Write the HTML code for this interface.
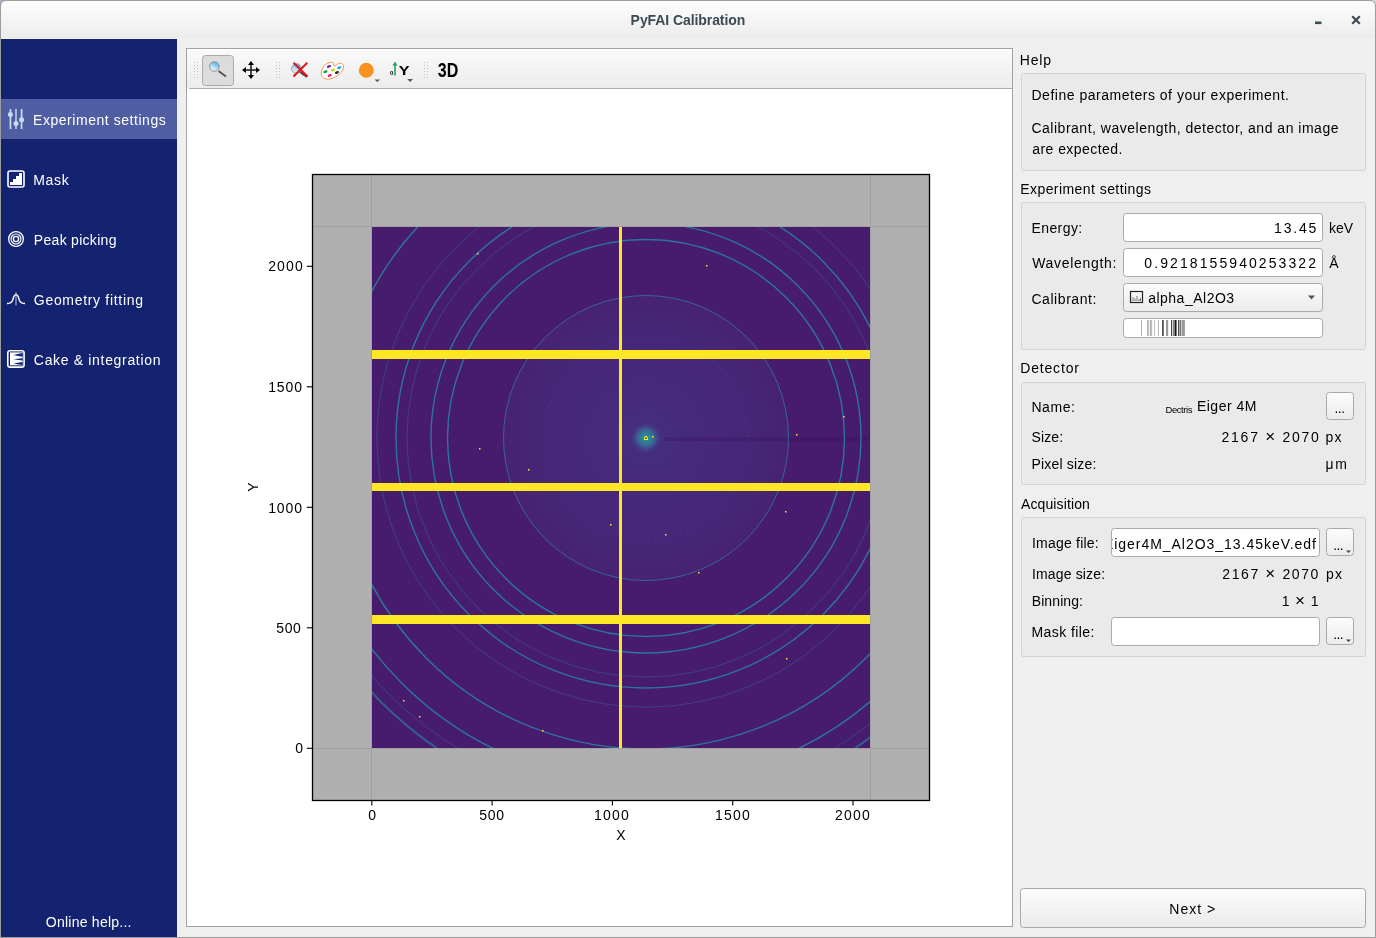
<!DOCTYPE html><html><head><meta charset="utf-8"><title>PyFAI Calibration</title><style>html,body{margin:0;padding:0;background:#efefef;overflow:hidden}svg{display:block;font-family:"Liberation Sans",sans-serif;will-change:transform}</style></head><body>
<svg width="1376" height="938" viewBox="0 0 1376 938">
<defs>
<linearGradient id="gTitle" x1="0" y1="0" x2="0" y2="1"><stop offset="0" stop-color="#fdfdfd"/><stop offset="1" stop-color="#ececec"/></linearGradient>
<linearGradient id="gTool" x1="0" y1="0" x2="0" y2="1"><stop offset="0" stop-color="#fafafa"/><stop offset="1" stop-color="#ececec"/></linearGradient>
<linearGradient id="gBtn" x1="0" y1="0" x2="0" y2="1"><stop offset="0" stop-color="#fcfcfc"/><stop offset="1" stop-color="#ebebeb"/></linearGradient>
<radialGradient id="gGlow" cx="646" cy="438" r="143" gradientUnits="userSpaceOnUse"><stop offset="0" stop-color="#452e7e"/><stop offset="0.5" stop-color="#46287a"/><stop offset="0.85" stop-color="#472575"/><stop offset="1" stop-color="#472371"/></radialGradient>
<radialGradient id="gSpot" cx="646" cy="438" r="17" gradientUnits="userSpaceOnUse"><stop offset="0" stop-color="#22a884"/><stop offset="0.2" stop-color="#2a8a90"/><stop offset="0.5" stop-color="#3a6196"/><stop offset="1" stop-color="#472b7b" stop-opacity="0"/></radialGradient>
<clipPath id="cImg"><rect x="372" y="227" width="498" height="521"/></clipPath>
<clipPath id="cFile"><rect x="1112" y="529" width="206" height="27"/></clipPath>
</defs>
<rect x="0" y="0" width="1376" height="938" fill="#efefef"/><rect x="0" y="0" width="8" height="8" fill="#a3b3c3"/><rect x="1368" y="0" width="8" height="8" fill="#d8d8d8"/>
<path d="M1 38 V6 Q1 1 6 1 H1370 Q1375 1 1375 6 V38 Z" fill="url(#gTitle)"/>
<text x="630.62" y="25" font-size="14" fill="#3c4b53" text-anchor="start" font-weight="bold" textLength="114.68" lengthAdjust="spacing" >PyFAI Calibration</text>
<rect x="1315" y="21.5" width="6.5" height="2.6" fill="#3c4b53"/>
<path d="M1353 17 L1359 23 M1359 17 L1353 23" stroke="#3c4b53" stroke-width="2.2" stroke-linecap="square"/>
<path d="M0.5 938 V6 Q0.5 0.5 6 0.5 H1370 Q1375.5 0.5 1375.5 6 V937.5 H0.5" fill="none" stroke="#9c9c9c" stroke-width="1"/>
<rect x="1" y="39" width="176" height="898" fill="#13236f"/>
<rect x="1" y="99" width="176" height="40" fill="#4f5ea3"/>
<g fill="#c4def0" stroke="none"><rect x="9.6" y="109" width="1.7" height="20"/><rect x="15.15" y="109" width="1.7" height="20" fill="#b2cde4"/><rect x="20.75" y="109" width="1.7" height="20"/><circle cx="10.4" cy="114.5" r="2.5"/><circle cx="16" cy="123.5" r="2.5"/><circle cx="21.6" cy="119.75" r="2.5"/></g>
<text x="33.00" y="125" font-size="14" fill="#fff" text-anchor="start" textLength="132.76" lengthAdjust="spacing" >Experiment settings</text>
<rect x="8" y="171" width="16" height="16" rx="2" fill="none" stroke="#fff" stroke-width="1.6"/>
<path d="M10 185 V182 H13 V179 H16 V176 H19 V173 H22 V185 Z" fill="#fff"/>
<text x="33.28" y="185" font-size="14" fill="#fff" text-anchor="start" textLength="35.40" lengthAdjust="spacing" >Mask</text>
<g fill="none" stroke="#fff"><circle cx="16" cy="239" r="7.4" stroke-width="1.3"/><circle cx="16" cy="239" r="5" stroke-width="1.2"/><circle cx="16" cy="239" r="2.6" stroke-width="1.4"/></g>
<text x="33.84" y="245" font-size="14" fill="#fff" text-anchor="start" textLength="82.60" lengthAdjust="spacing" >Peak picking</text>
<rect x="15.3" y="292.2" width="1.4" height="13.2" fill="#8a96cc"/>
<path d="M7 303.5 C10 303.5 11.6 302.8 12.6 300.2 L13.7 296.8 C14.4 295 15.1 294.6 16 294.6 C16.9 294.6 17.6 295 18.3 296.8 L19.4 300.2 C20.4 302.8 22 303.5 25 303.5" fill="none" stroke="#fff" stroke-width="1.4"/>
<text x="33.84" y="305" font-size="14" fill="#fff" text-anchor="start" textLength="109.12" lengthAdjust="spacing" >Geometry fitting</text>
<rect x="7.8" y="350.7" width="16.3" height="16.4" rx="2.2" fill="none" stroke="#fff" stroke-width="1.6"/>
<defs><linearGradient id="gWedge" x1="0" y1="0" x2="1" y2="0"><stop offset="0" stop-color="#13236f" stop-opacity="0.3"/><stop offset="0.35" stop-color="#13236f"/><stop offset="1" stop-color="#13236f"/></linearGradient></defs>
<rect x="10" y="352" width="12.6" height="13.6" fill="#fff"/>
<path d="M12.8 354.9 L22.6 352.9 V356.8 Z M12.8 359.3 L22.6 358.2 V360.6 Z M12.8 363.6 L22.6 362.0 V365.0 Z" fill="url(#gWedge)"/>
<rect x="10" y="351.8" width="12.6" height="1.1" fill="#13236f" opacity="0.45"/><rect x="10" y="364.9" width="12.6" height="1.1" fill="#13236f" opacity="0.45"/>
<text x="33.84" y="365" font-size="14" fill="#fff" text-anchor="start" textLength="126.60" lengthAdjust="spacing" >Cake &amp; integration</text>
<text x="45.84" y="927" font-size="14" fill="#fff" text-anchor="start" textLength="85.60" lengthAdjust="spacing" >Online help...</text>
<rect x="186.5" y="48.5" width="826" height="878" fill="#fff" stroke="#a2a2a2"/>
<rect x="187" y="49" width="825" height="39" fill="url(#gTool)"/>
<rect x="187" y="49" width="825" height="1" fill="#fff"/>
<rect x="189" y="88" width="823" height="1" fill="#acacac"/>
<rect x="194" y="62" width="1" height="1" fill="#c2c2c2"/>
<rect x="197" y="62" width="1" height="1" fill="#c2c2c2"/>
<rect x="194" y="65" width="1" height="1" fill="#c2c2c2"/>
<rect x="197" y="65" width="1" height="1" fill="#c2c2c2"/>
<rect x="194" y="68" width="1" height="1" fill="#c2c2c2"/>
<rect x="197" y="68" width="1" height="1" fill="#c2c2c2"/>
<rect x="194" y="71" width="1" height="1" fill="#c2c2c2"/>
<rect x="197" y="71" width="1" height="1" fill="#c2c2c2"/>
<rect x="194" y="74" width="1" height="1" fill="#c2c2c2"/>
<rect x="197" y="74" width="1" height="1" fill="#c2c2c2"/>
<rect x="194" y="77" width="1" height="1" fill="#c2c2c2"/>
<rect x="197" y="77" width="1" height="1" fill="#c2c2c2"/>
<rect x="276" y="62" width="1" height="1" fill="#c2c2c2"/>
<rect x="279" y="62" width="1" height="1" fill="#c2c2c2"/>
<rect x="276" y="65" width="1" height="1" fill="#c2c2c2"/>
<rect x="279" y="65" width="1" height="1" fill="#c2c2c2"/>
<rect x="276" y="68" width="1" height="1" fill="#c2c2c2"/>
<rect x="279" y="68" width="1" height="1" fill="#c2c2c2"/>
<rect x="276" y="71" width="1" height="1" fill="#c2c2c2"/>
<rect x="279" y="71" width="1" height="1" fill="#c2c2c2"/>
<rect x="276" y="74" width="1" height="1" fill="#c2c2c2"/>
<rect x="279" y="74" width="1" height="1" fill="#c2c2c2"/>
<rect x="276" y="77" width="1" height="1" fill="#c2c2c2"/>
<rect x="279" y="77" width="1" height="1" fill="#c2c2c2"/>
<rect x="424" y="62" width="1" height="1" fill="#c2c2c2"/>
<rect x="427" y="62" width="1" height="1" fill="#c2c2c2"/>
<rect x="424" y="65" width="1" height="1" fill="#c2c2c2"/>
<rect x="427" y="65" width="1" height="1" fill="#c2c2c2"/>
<rect x="424" y="68" width="1" height="1" fill="#c2c2c2"/>
<rect x="427" y="68" width="1" height="1" fill="#c2c2c2"/>
<rect x="424" y="71" width="1" height="1" fill="#c2c2c2"/>
<rect x="427" y="71" width="1" height="1" fill="#c2c2c2"/>
<rect x="424" y="74" width="1" height="1" fill="#c2c2c2"/>
<rect x="427" y="74" width="1" height="1" fill="#c2c2c2"/>
<rect x="424" y="77" width="1" height="1" fill="#c2c2c2"/>
<rect x="427" y="77" width="1" height="1" fill="#c2c2c2"/>
<rect x="202.5" y="55.5" width="31" height="30" rx="3" fill="#dcdcdc" stroke="#ababab"/>
<defs><linearGradient id="gLens" x1="0.7" y1="0" x2="0.2" y2="1"><stop offset="0" stop-color="#3ab0ea"/><stop offset="0.6" stop-color="#bfe2f5"/><stop offset="1" stop-color="#f0f8fc"/></linearGradient></defs>
<line x1="218.5" y1="71" x2="226" y2="76.5" stroke="#5b4a50" stroke-width="1.8"/>
<circle cx="214.3" cy="66.5" r="4.8" fill="url(#gLens)" stroke="#9a8e90" stroke-width="1"/>
<g fill="#000"><rect x="250.2" y="63" width="1.6" height="14" fill="#222"/><rect x="244" y="69.2" width="14" height="1.6" fill="#222"/><path d="M251 61 L254 65 H248 Z M251 79 L254 75 H248 Z M242 70 L246 67 V73 Z M260 70 L256 67 V73 Z"/></g>
<circle cx="296.4" cy="68.5" r="4.8" fill="url(#gLens)" stroke="#9a9a9a" stroke-width="1"/>
<line x1="300" y1="72" x2="307" y2="77" stroke="#444" stroke-width="2"/>
<path d="M293.5 62.7 L307.5 76.5 M307.3 62.7 L293.5 76.5" stroke="#e3141c" stroke-width="2"/>
<path d="M330 62.5 C324 63.5 320.5 70 321.5 75 C322.5 79.5 328 80 333 78 C339 75.5 344.5 70 343.5 65.5 C342.5 62.5 338.5 63 336.5 65 C334.5 66.5 333 66 333.5 64 C334 62.5 332 62 330 62.5 Z" fill="#fff" stroke="#f29a4a" stroke-width="1"/>
<ellipse cx="329" cy="66.4" rx="2.2" ry="1.3" transform="rotate(-20 329 66.4)" fill="#6a22b0"/>
<ellipse cx="339.2" cy="67.8" rx="2.2" ry="1.3" transform="rotate(-20 339.2 67.8)" fill="#1ea8e8"/>
<ellipse cx="333" cy="70" rx="2.2" ry="1.3" transform="rotate(-20 333 70)" fill="#c8dc10"/>
<ellipse cx="325.4" cy="71.8" rx="2.2" ry="1.3" transform="rotate(-20 325.4 71.8)" fill="#10a040"/>
<ellipse cx="337" cy="72.5" rx="2.2" ry="1.3" transform="rotate(-20 337 72.5)" fill="#303030"/>
<ellipse cx="329.8" cy="75.4" rx="2.2" ry="1.3" transform="rotate(-20 329.8 75.4)" fill="#e81c78"/>
<circle cx="366.3" cy="70.2" r="7.5" fill="#f7931e"/>
<path d="M374.5 79.5 H380 L377.25 82 Z" fill="#555"/>
<rect x="394.2" y="64.5" width="1.6" height="11" fill="#1fa35a"/><path d="M392.4 65.6 L395 61.6 L397.6 65.6 Z" fill="#1fa35a"/>
<text x="390.00" y="75" font-size="6" fill="#000" text-anchor="start" font-weight="bold" >0</text>
<text x="398.70" y="75.1" font-size="13.2" fill="#000" text-anchor="start" font-weight="bold" textLength="10.80" lengthAdjust="spacingAndGlyphs" >Y</text>
<path d="M407.3 79 H413 L410.15 82 Z" fill="#555"/>
<text x="437.80" y="77" font-size="19.5" fill="#000" text-anchor="start" font-weight="bold" textLength="20.50" lengthAdjust="spacingAndGlyphs" >3D</text>
<rect x="312" y="174" width="617" height="626" fill="#b0b0b0"/>
<g clip-path="url(#cImg)">
<rect x="372" y="227" width="498" height="521" fill="#471b6e"/>
<circle cx="646" cy="438" r="143" fill="url(#gGlow)"/>
<rect x="664" y="437" width="206" height="4" fill="#3a0c5e" opacity="0.3"/>
<circle cx="646" cy="438" r="102" fill="none" stroke="#3f5e98" stroke-width="1.2" stroke-dasharray="1.5 5" opacity="0.4"/>
<circle cx="646" cy="438" r="142.5" fill="none" stroke="#3274a0" stroke-width="1.0" opacity="0.8"/>
<circle cx="646" cy="438" r="198.5" fill="none" stroke="#2c7699" stroke-width="1.4" opacity="1"/>
<circle cx="646" cy="438" r="215" fill="none" stroke="#2c7699" stroke-width="1.4" opacity="1"/>
<circle cx="646" cy="438" r="239" fill="none" stroke="#3a5e98" stroke-width="0.9" opacity="0.6"/>
<circle cx="646" cy="438" r="250" fill="none" stroke="#2c7699" stroke-width="1.4" opacity="1"/>
<circle cx="646" cy="438" r="269" fill="none" stroke="#3a5e98" stroke-width="0.9" opacity="0.6"/>
<circle cx="646" cy="438" r="311" fill="none" stroke="#2c7699" stroke-width="1.5" opacity="1"/>
<circle cx="646" cy="438" r="346" fill="none" stroke="#2c7699" stroke-width="1.5" opacity="1"/>
<circle cx="646" cy="438" r="363" fill="none" stroke="#3a5e98" stroke-width="0.9" opacity="0.6"/>
<circle cx="646" cy="438" r="374" fill="none" stroke="#2c7699" stroke-width="2.0" opacity="0.75"/>
<circle cx="646" cy="438" r="17" fill="url(#gSpot)"/>
<path d="M644 437 H645 V436 H647 V437 H648 V440 H644 Z" fill="#fde725"/><rect x="645.2" y="437.4" width="1.6" height="1.6" fill="#1c3a8a"/>
<rect x="652" y="436" width="1.5" height="1.5" fill="#fde725"/>
<rect x="477" y="253" width="1.5" height="1.5" fill="#fde725"/>
<rect x="706" y="265" width="1.5" height="1.5" fill="#fde725"/>
<rect x="479" y="448" width="1.5" height="1.5" fill="#fde725"/>
<rect x="528" y="469" width="1.5" height="1.5" fill="#fde725"/>
<rect x="610" y="524" width="1.5" height="1.5" fill="#fde725"/>
<rect x="665" y="534" width="1.5" height="1.5" fill="#fde725"/>
<rect x="698" y="572" width="1.5" height="1.5" fill="#fde725"/>
<rect x="785" y="511" width="1.5" height="1.5" fill="#fde725"/>
<rect x="796" y="434" width="1.5" height="1.5" fill="#fde725"/>
<rect x="843" y="416" width="1.5" height="1.5" fill="#fde725"/>
<rect x="786" y="658" width="1.5" height="1.5" fill="#fde725"/>
<rect x="403" y="700" width="1.5" height="1.5" fill="#fde725"/>
<rect x="419" y="716" width="1.5" height="1.5" fill="#fde725"/>
<rect x="542" y="730" width="1.5" height="1.5" fill="#fde725"/>
<rect x="372" y="350" width="498" height="9" fill="#fde725"/>
<rect x="372" y="483" width="498" height="8" fill="#fde725"/>
<rect x="372" y="615" width="498" height="9" fill="#fde725"/>
<rect x="619" y="227" width="3" height="521" fill="#fde725"/>
</g>
<g stroke="#a0a0a0" stroke-width="1"><line x1="371.5" y1="174" x2="371.5" y2="800"/><line x1="870.5" y1="174" x2="870.5" y2="800"/><line x1="312" y1="226.5" x2="929" y2="226.5"/><line x1="312" y1="748.5" x2="929" y2="748.5"/></g>
<rect x="312.5" y="174.5" width="617" height="626" fill="none" stroke="#000" stroke-width="1.3"/>
<line x1="371.8" y1="800" x2="371.8" y2="805.5" stroke="#000" stroke-width="1.1"/>
<text x="368.36" y="820" font-size="14" fill="#000" text-anchor="start" textLength="10.82" lengthAdjust="spacing" >0</text>
<line x1="306.8" y1="748.3" x2="312" y2="748.3" stroke="#000" stroke-width="1.1"/>
<text x="295.14" y="752.9" font-size="14" fill="#000" text-anchor="start" textLength="10.24" lengthAdjust="spacing" >0</text>
<line x1="492.1" y1="800" x2="492.1" y2="805.5" stroke="#000" stroke-width="1.1"/>
<text x="479.14" y="820" font-size="14" fill="#000" text-anchor="start" textLength="24.92" lengthAdjust="spacing" >500</text>
<line x1="306.8" y1="627.8" x2="312" y2="627.8" stroke="#000" stroke-width="1.1"/>
<text x="276.14" y="633.2" font-size="14" fill="#000" text-anchor="start" textLength="24.78" lengthAdjust="spacing" >500</text>
<line x1="612.4" y1="800" x2="612.4" y2="805.5" stroke="#000" stroke-width="1.1"/>
<text x="594.06" y="820" font-size="14" fill="#000" text-anchor="start" textLength="34.72" lengthAdjust="spacing" >1000</text>
<line x1="306.8" y1="507.3" x2="312" y2="507.3" stroke="#000" stroke-width="1.1"/>
<text x="268.14" y="512.6" font-size="14" fill="#000" text-anchor="start" textLength="34.00" lengthAdjust="spacing" >1000</text>
<line x1="732.7" y1="800" x2="732.7" y2="805.5" stroke="#000" stroke-width="1.1"/>
<text x="714.92" y="820" font-size="14" fill="#000" text-anchor="start" textLength="35.00" lengthAdjust="spacing" >1500</text>
<line x1="306.8" y1="386.8" x2="312" y2="386.8" stroke="#000" stroke-width="1.1"/>
<text x="268.14" y="392.1" font-size="14" fill="#000" text-anchor="start" textLength="34.00" lengthAdjust="spacing" >1500</text>
<line x1="853.0" y1="800" x2="853.0" y2="805.5" stroke="#000" stroke-width="1.1"/>
<text x="835.08" y="820" font-size="14" fill="#000" text-anchor="start" textLength="34.84" lengthAdjust="spacing" >2000</text>
<line x1="306.8" y1="266.3" x2="312" y2="266.3" stroke="#000" stroke-width="1.1"/>
<text x="268.14" y="271.1" font-size="14" fill="#000" text-anchor="start" textLength="34.64" lengthAdjust="spacing" >2000</text>
<text x="616.30" y="840" font-size="14" fill="#000" text-anchor="start" textLength="6.90" lengthAdjust="spacing" >X</text>
<text x="0" y="0" font-size="14" fill="#000" text-anchor="middle" transform="translate(257.7 487) rotate(-90)">Y</text>
<text x="1019.64" y="65" font-size="14" fill="#000" text-anchor="start" textLength="31.44" lengthAdjust="spacing" >Help</text>
<rect x="1021.5" y="73.5" width="344" height="97" rx="2" fill="#eaeaea" stroke="#d3d3d3"/>
<text x="1031.44" y="100" font-size="14" fill="#000" text-anchor="start" textLength="257.48" lengthAdjust="spacing" >Define parameters of your experiment.</text>
<text x="1031.44" y="133.3" font-size="14" fill="#000" text-anchor="start" textLength="307.04" lengthAdjust="spacing" >Calibrant, wavelength, detector, and an image</text>
<text x="1032.24" y="154.2" font-size="14" fill="#000" text-anchor="start" textLength="90.12" lengthAdjust="spacing" >are expected.</text>
<text x="1020.20" y="194" font-size="14" fill="#000" text-anchor="start" textLength="130.80" lengthAdjust="spacing" >Experiment settings</text>
<rect x="1021.5" y="202.5" width="344" height="147" rx="2" fill="#eaeaea" stroke="#d3d3d3"/>
<text x="1031.44" y="233" font-size="14" fill="#000" text-anchor="start" textLength="50.76" lengthAdjust="spacing" >Energy:</text>
<rect x="1123.5" y="213.5" width="199" height="28" rx="3" fill="#fff" stroke="#a9a9a9"/>
<text x="1274.08" y="233" font-size="14" fill="#000" text-anchor="start" textLength="42.28" lengthAdjust="spacing" >13.45</text>
<text x="1328.96" y="233" font-size="14" fill="#000" text-anchor="start" textLength="24.24" lengthAdjust="spacing" >keV</text>
<text x="1032.24" y="268.3" font-size="14" fill="#000" text-anchor="start" textLength="84.12" lengthAdjust="spacing" >Wavelength:</text>
<rect x="1123.5" y="248.5" width="199" height="28" rx="3" fill="#fff" stroke="#a9a9a9"/>
<text x="1144.36" y="268" font-size="14" fill="#000" text-anchor="start" textLength="171.64" lengthAdjust="spacing" >0.9218155940253322</text>
<text x="1329.20" y="268" font-size="14" fill="#000" text-anchor="start" textLength="8.00" lengthAdjust="spacing" >Å</text>
<text x="1031.44" y="303.5" font-size="14" fill="#000" text-anchor="start" textLength="64.92" lengthAdjust="spacing" >Calibrant:</text>
<rect x="1123.5" y="283.5" width="199" height="28" rx="3" fill="url(#gBtn)" stroke="#a9a9a9"/>
<rect x="1130.5" y="291.5" width="12" height="11" fill="none" stroke="#222" stroke-width="1.2"/>
<path d="M1133 301 V297 M1135 301 V298.5 M1137 301 V296 M1139 301 V299 M1140.5 301 V298" stroke="#555" stroke-width="0.8"/>
<text x="1148.14" y="302.6" font-size="14" fill="#000" text-anchor="start" textLength="85.96" lengthAdjust="spacing" >alpha_Al2O3</text>
<path d="M1308 295.5 H1315 L1311.5 299.5 Z" fill="#555"/>
<rect x="1123.5" y="318.5" width="199" height="19" rx="3" fill="#fff" stroke="#a9a9a9"/>
<rect x="1141" y="320" width="0.6" height="16" fill="#777"/>
<rect x="1147" y="320" width="0.6" height="16" fill="#888"/>
<rect x="1148.5" y="320" width="0.6" height="16" fill="#888"/>
<rect x="1150" y="320" width="1" height="16" fill="#aaa"/>
<rect x="1151.5" y="320" width="0.6" height="16" fill="#888"/>
<rect x="1154" y="320" width="0.6" height="16" fill="#999"/>
<rect x="1158" y="320" width="0.6" height="16" fill="#888"/>
<rect x="1162" y="320" width="1.8" height="16" fill="#555"/>
<rect x="1166" y="320" width="2.2" height="16" fill="#999"/>
<rect x="1171" y="320" width="1.2" height="16" fill="#444"/>
<rect x="1173" y="320" width="0.8" height="16" fill="#666"/>
<rect x="1174.5" y="320" width="1.4" height="16" fill="#000"/>
<rect x="1176.3" y="320" width="0.7" height="16" fill="#444"/>
<rect x="1178" y="320" width="1.5" height="16" fill="#555"/>
<rect x="1180" y="320" width="1.0" height="16" fill="#777"/>
<rect x="1181.5" y="320" width="3.4" height="16" fill="#999"/>
<text x="1020.20" y="373.1" font-size="14" fill="#000" text-anchor="start" textLength="58.72" lengthAdjust="spacing" >Detector</text>
<rect x="1021.5" y="382.5" width="344" height="102" rx="2" fill="#eaeaea" stroke="#d3d3d3"/>
<text x="1031.44" y="412.1" font-size="14" fill="#000" text-anchor="start" textLength="43.44" lengthAdjust="spacing" >Name:</text>
<text x="1165.44" y="413.2" font-size="9.5" fill="#000" text-anchor="start" textLength="27.04" lengthAdjust="spacing" >Dectris</text>
<text x="1196.92" y="411.3" font-size="14" fill="#000" text-anchor="start" textLength="59.52" lengthAdjust="spacing" >Eiger 4M</text>
<rect x="1326.5" y="392.5" width="27" height="27" rx="3" fill="url(#gBtn)" stroke="#a9a9a9"/>
<text x="1339.80" y="413" font-size="14" fill="#000" text-anchor="middle" textLength="10.50" lengthAdjust="spacing" >...</text>
<text x="1031.44" y="442" font-size="14" fill="#000" text-anchor="start" textLength="31.76" lengthAdjust="spacing" >Size:</text>
<text x="1221.58" y="442.2" font-size="14" fill="#000" text-anchor="start" textLength="97.28" lengthAdjust="spacing" >2167 <tspan font-size="17">×</tspan> 2070</text>
<text x="1325.44" y="442" font-size="14" fill="#000" text-anchor="start" textLength="15.96" lengthAdjust="spacing" >px</text>
<text x="1031.44" y="469.1" font-size="14" fill="#000" text-anchor="start" textLength="64.92" lengthAdjust="spacing" >Pixel size:</text>
<text x="1325.44" y="469" font-size="14" fill="#000" text-anchor="start" textLength="21.60" lengthAdjust="spacing" >μm</text>
<text x="1021.00" y="509" font-size="14" fill="#000" text-anchor="start" textLength="68.88" lengthAdjust="spacing" >Acquisition</text>
<rect x="1021.5" y="517.5" width="344" height="139" rx="2" fill="#eaeaea" stroke="#d3d3d3"/>
<text x="1031.92" y="548" font-size="14" fill="#000" text-anchor="start" textLength="66.78" lengthAdjust="spacing" >Image file:</text>
<rect x="1111.5" y="528.5" width="208" height="28" rx="3" fill="#fff" stroke="#a9a9a9"/>
<g clip-path="url(#cFile)">
<text x="1315.90" y="548.5" font-size="14" fill="#000" text-anchor="end" textLength="212.00" lengthAdjust="spacing" >Eiger4M_Al2O3_13.45keV.edf</text>
</g>
<rect x="1326.5" y="528.5" width="27" height="27" rx="3" fill="url(#gBtn)" stroke="#a9a9a9"/>
<text x="1338.50" y="549.5" font-size="14" fill="#000" text-anchor="middle" textLength="10.50" lengthAdjust="spacing" >...</text>
<path d="M1346 550.5 H1351 L1348.5 553 Z" fill="#444"/>
<text x="1031.92" y="579.4" font-size="14" fill="#000" text-anchor="start" textLength="73.16" lengthAdjust="spacing" >Image size:</text>
<text x="1222.28" y="579" font-size="14" fill="#000" text-anchor="start" textLength="96.08" lengthAdjust="spacing" >2167 <tspan font-size="17">×</tspan> 2070</text>
<text x="1325.96" y="579" font-size="14" fill="#000" text-anchor="start" textLength="15.96" lengthAdjust="spacing" >px</text>
<text x="1031.72" y="606.2" font-size="14" fill="#000" text-anchor="start" textLength="51.28" lengthAdjust="spacing" >Binning:</text>
<text x="1281.70" y="606" font-size="14" fill="#000" text-anchor="start" textLength="36.74" lengthAdjust="spacing" >1 <tspan font-size="17">×</tspan> 1</text>
<text x="1031.44" y="637.2" font-size="14" fill="#000" text-anchor="start" textLength="62.98" lengthAdjust="spacing" >Mask file:</text>
<rect x="1111.5" y="617.5" width="208" height="28" rx="3" fill="#fff" stroke="#a9a9a9"/>
<rect x="1326.5" y="617.5" width="27" height="27" rx="3" fill="url(#gBtn)" stroke="#a9a9a9"/>
<text x="1338.50" y="638.5" font-size="14" fill="#000" text-anchor="middle" textLength="10.50" lengthAdjust="spacing" >...</text>
<path d="M1346 639.5 H1351 L1348.5 642 Z" fill="#444"/>
<rect x="1020.5" y="888.5" width="345" height="39" rx="3" fill="url(#gBtn)" stroke="#a9a9a9"/>
<text x="1169.30" y="914.2" font-size="14" fill="#000" text-anchor="start" textLength="45.84" lengthAdjust="spacing" >Next &gt;</text>
</svg></body></html>
